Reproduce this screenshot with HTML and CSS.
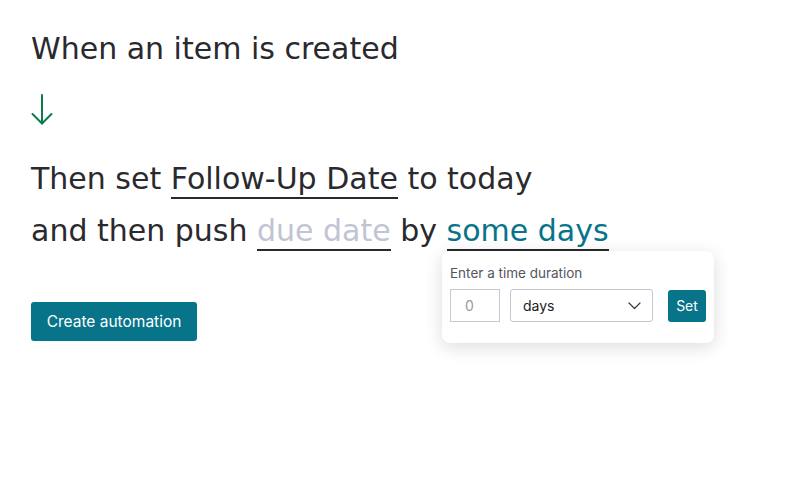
FILE: index.html
```html
<!DOCTYPE html>
<html>
<head>
<meta charset="utf-8">
<link rel="stylesheet" href="styles.css">
</head>
<body>
<main class="page">
  <p class="trigger">When an item is created</p>
  <div class="arrow">
    <svg width="24" height="31" viewBox="0 0 24 31" fill="none" stroke="#0b7b47" stroke-width="2" stroke-linecap="round" stroke-linejoin="round">
      <path d="M11 1 V29.5"/>
      <path d="M1.5 20 L11 29.5 L20.5 20"/>
    </svg>
  </div>
  <div class="sentence">
    <div class="line">Then set <span class="token">Follow-Up Date</span> to today</div>
    <div class="line">and then push <span class="token placeholder">due date</span> by <span class="token active">some days</span>
      <div class="popover">
        <div class="pop-label">Enter a time duration</div>
        <div class="pop-row">
          <input class="num" type="text" placeholder="0">
          <div class="select"><span>days</span>
            <svg width="13" height="8" viewBox="0 0 13 8" fill="none" stroke="#3a3a3a" stroke-width="1.2" stroke-linecap="round" stroke-linejoin="round"><path d="M1 1 L6.5 6.5 L12 1"/></svg>
          </div>
          <button class="set">Set</button>
        </div>
      </div>
    </div>
  </div>
  <button class="create">Create automation</button>
</main>
</body>
</html>
```
FILE: styles.css
```css
* { box-sizing: border-box; }
body {
  margin: 0;
  background: #fff;
  font-family: "DejaVu Sans", "Noto Sans", sans-serif;
  color: #2a2a2e;
}
.page {
  padding: 27px 31px;
}
.trigger {
  margin: 0;
  font-size: 30px;
  line-height: 44px;
  font-weight: 400;
}
.arrow {
  margin-top: 23px;
  height: 31px;
  line-height: 0;
}
.sentence {
  margin-top: 28px;
  font-size: 30px;
}
.line {
  position: relative;
  line-height: 52px;
  white-space: nowrap;
}
.token {
  display: inline-block;
  line-height: 36px;
  border-bottom: 2px solid #2a2a2e;
}
.placeholder { color: #c1c4d4; }
.active { color: #087489; }
.popover {
  position: absolute;
  left: 411px;
  top: 46px;
  width: 272px;
  height: 92px;
  background: #fff;
  border-radius: 8px;
  box-shadow: 0 4px 18px rgba(0,0,0,0.14);
  padding: 14px 8px;
  font-family: "Inter", "Lato", sans-serif;
  line-height: normal;
}
.pop-label {
  font-size: 13.5px;
  color: #55555f;
}
.pop-row {
  display: flex;
  align-items: center;
  margin-top: 8px;
}
.num {
  width: 50px;
  height: 33px;
  border: 1px solid #c8c8d0;
  border-radius: 0;
  padding: 0 0 0 14px;
  font-size: 14px;
  font-family: inherit;
  outline: none;
}
.num::placeholder { color: #9a9aa4; }
.select {
  margin-left: 10px;
  width: 143px;
  height: 33px;
  border: 1px solid #c3c5d2;
  border-radius: 3px;
  display: flex;
  align-items: center;
  justify-content: space-between;
  padding: 0 11px 0 12px;
  font-size: 14px;
  color: #222;
}
.set {
  margin-left: 15px;
  width: 38px;
  height: 32px;
  border: 0;
  border-radius: 3px;
  background: #087489;
  color: #fff;
  font-family: inherit;
  font-size: 14px;
  padding: 0;
}
.create {
  display: block;
  margin-top: 45px;
  width: 166px;
  height: 39px;
  border: 0;
  border-radius: 3px;
  background: #087489;
  color: #fff;
  font-family: "Inter", "Lato", sans-serif;
  font-size: 15.5px;
  padding: 0;
}
```
